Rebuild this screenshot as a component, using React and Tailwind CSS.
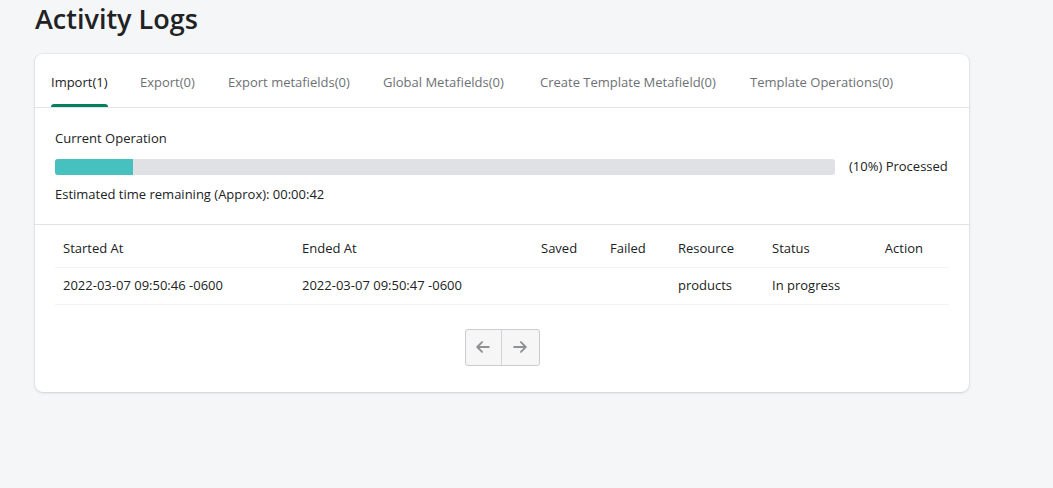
import React from "react";

const tabs = [
  { t: "Import(1)", w: "w-[89px]" },
  { t: "Export(0)", w: "w-[88px]" },
  { t: "Export metafields(0)", w: "w-[155px]" },
  { t: "Global Metafields(0)", w: "w-[157px]" },
  { t: "Create Template Metafield(0)", w: "w-[210px]" },
  { t: "Template Operations(0)", w: "w-auto" },
];

function Arrow({ dir }) {
  return (
    <svg width="18" height="18" viewBox="0 0 20 20" fill="none" stroke="#8c9196" strokeWidth="2" strokeLinecap="round" strokeLinejoin="round">
      {dir === "left" ? (
        <path d="M16.5 10H3.5M9 4.5L3.5 10 9 15.5" />
      ) : (
        <path d="M3.5 10h13M11 4.5l5.5 5.5-5.5 5.5" />
      )}
    </svg>
  );
}

export default function App() {
  return (
    <div
      className="min-h-[488px] w-full bg-[#f4f6f8] text-[#202223]"
      style={{ fontFamily: '"Open Sans", "Noto Sans", sans-serif' }}
    >
      <div className="pl-[35px] pr-[84px]">
        <h1 className="text-[27px] font-semibold leading-[38px] text-[#202223]">Activity Logs</h1>
        <div className="mt-[16px] rounded-[8px] bg-white shadow-[0_0_0_1px_rgba(63,63,68,0.05),0_1px_3px_0_rgba(63,63,68,0.15)]">
          <div className="flex border-b border-[#e1e3e5] px-[16px]">
            {tabs.map((x, i) => (
              <div key={x.t} className={`relative shrink-0 pt-[20px] pb-[17px] ${x.w}`}>
                <span className={`block text-[13px] leading-[16px] whitespace-nowrap ${i === 0 ? "text-[#202223]" : "text-[#6d7175]"}`}>{x.t}</span>
                {i === 0 && (
                  <div className="absolute bottom-0 left-0 w-[57px] h-[3px] rounded-t-[3px] bg-[#008060]" />
                )}
              </div>
            ))}
          </div>
          <div className="border-b border-[#e1e3e5] px-[20px] pt-[22px] pb-[21px] text-[13px]">
            <div className="leading-[17px]">Current Operation</div>
            <div className="mt-[11px] flex items-center">
              <div className="h-[16px] w-[780px] overflow-hidden rounded-[3px] bg-[#dfe1e5]">
                <div className="h-full w-[10%] bg-[#47c1bf]" />
              </div>
              <div className="ml-[14px] leading-[17px]">(10%) Processed</div>
            </div>
            <div className="mt-[11px] leading-[17px]">Estimated time remaining (Approx): 00:00:42</div>
          </div>
          <div className="px-[20px] pt-[5px] pb-[26px]">
            <table className="w-full text-[13px]">
              <thead>
                <tr className="border-b border-[#f1f2f3]">
                  <th className="h-[37px] pl-[8px] text-left font-normal w-[247px]">Started At</th>
                  <th className="text-left font-normal w-[239px]">Ended At</th>
                  <th className="text-left font-normal w-[69px]">Saved</th>
                  <th className="text-left font-normal w-[68px]">Failed</th>
                  <th className="text-left font-normal w-[94px]">Resource</th>
                  <th className="text-left font-normal">Status</th>
                  <th className="pr-[26px] text-right font-normal">Action</th>
                </tr>
              </thead>
              <tbody>
                <tr className="border-b border-[#f1f2f3]">
                  <td className="h-[37px] pl-[8px]">2022-03-07 09:50:46 -0600</td>
                  <td>2022-03-07 09:50:47 -0600</td>
                  <td></td>
                  <td></td>
                  <td>products</td>
                  <td>In progress</td>
                  <td></td>
                </tr>
              </tbody>
            </table>
            <div className="mt-[24px] flex justify-center">
              <div className="flex h-[37px] overflow-hidden rounded-[3px] border border-[#c9cccf] bg-[#f6f6f7]">
                <button className="flex w-[36px] items-center justify-center border-r border-[#d2d5d8]">
                  <Arrow dir="left" />
                </button>
                <button className="flex w-[37px] items-center justify-center">
                  <Arrow dir="right" />
                </button>
              </div>
            </div>
          </div>
        </div>
      </div>
    </div>
  );
}
